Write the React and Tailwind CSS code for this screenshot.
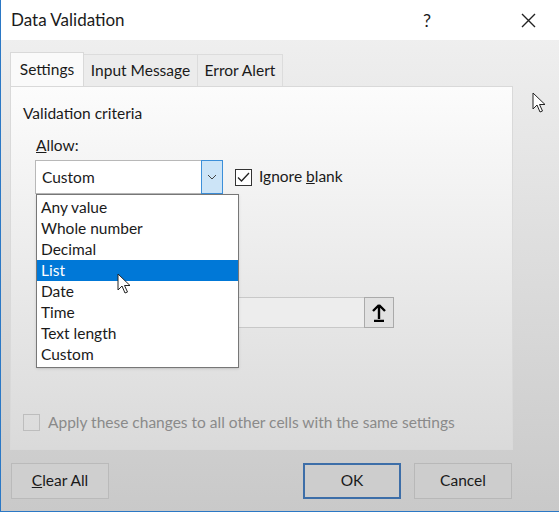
import React from "react";

const Cursor = ({ className }) => (
  <svg className={className} width="14" height="22" viewBox="0 0 14 22">
    <path d="M1 1 L1 17 L5 13 L8 20 L10.5 19 L7.5 12.5 L13 12.5 Z" fill="white" stroke="#222" strokeWidth="1" strokeLinejoin="round" />
  </svg>
);

export default function App() {
  const items = ["Any value", "Whole number", "Decimal", "List", "Date", "Time", "Text length", "Custom"];
  return (
    <div className="w-[559px] h-[512px] overflow-hidden relative border-l border-b border-[#2b78c5] text-[#1a1a1a] bg-gradient-to-b from-[#f2f2f2] to-[#c9c9c9]" style={{ fontFamily: 'Lato,"Noto Sans",sans-serif' }}>
      <div className="h-[40px] bg-white flex items-center pl-[10px] text-[17px]">
        <span>Data Validation</span>
        <span className="ml-auto mr-[90px] text-[18px]">?</span>
        <svg className="mr-[23px]" width="15" height="15" viewBox="0 0 15 15"><path d="M1 1 L14 14 M14 1 L1 14" stroke="#222" strokeWidth="1.4" /></svg>
      </div>
      <div className="flex mt-[12px] ml-[9px] h-[34px] text-[15.5px]">
        <div className="w-[74px] bg-[#fafafa] border border-b-0 border-[#d9d9d9] flex items-center justify-center pt-[1px]">Settings</div>
        <div className="w-[114px] bg-[#ececec] border-t border-r border-[#dcdcdc] flex items-center justify-center mt-[2px]">Input Message</div>
        <div className="w-[85px] bg-[#ececec] border-t border-r border-[#dcdcdc] flex items-center justify-center mt-[2px]">Error Alert</div>
      </div>
      <div className="ml-[9px] w-[503px] h-[364px] border border-[#d9d9d9] bg-gradient-to-b from-[#fcfcfc] to-[#dadada] relative text-[15.5px]">
        <div className="pl-[12px] pt-[16px] leading-[20px]">Validation criteria</div>
        <div className="pl-[25px] pt-[12px] leading-[20px]"><span className="underline">A</span>llow:</div>
        <div className="flex items-center mt-[5px] ml-[24px]">
          <div className="w-[188px] h-[34px] border border-[#b8b8b8] bg-white flex items-center">
            <span className="pl-[6px] pt-[2px] flex-1">Custom</span>
            <div className="w-[22px] h-[34px] -mr-px bg-[#cce4f7] border border-[#3c8fd9] flex items-center justify-center">
              <svg width="10" height="6" viewBox="0 0 10 6"><path d="M1 1 L5 5 L9 1" fill="none" stroke="#444" strokeWidth="1" /></svg>
            </div>
          </div>
          <div className="ml-[12px] w-[17px] h-[17px] border border-[#333] bg-white flex items-center justify-center">
            <svg width="13" height="11" viewBox="0 0 13 11"><path d="M1 5.5 L4.5 9 L12 1" fill="none" stroke="#222" strokeWidth="1.3" /></svg>
          </div>
          <span className="ml-[7px]">Ignore <span className="underline">b</span>lank</span>
        </div>
        <div className="absolute left-[227px] top-[210px] w-[156px] h-[31px] border border-[#c8c8c8] bg-[#ededed] flex justify-end">
          <div className="w-[30px] h-[31px] -mt-px -mr-px border border-[#aaa] bg-[#e1e1e1] flex items-center justify-center">
            <svg width="14" height="18" viewBox="0 0 14 18"><path d="M7 1 L1 7 M7 1 L13 7 M7 1 L7 15 M2 17 L12 17" fill="none" stroke="#000" strokeWidth="2.4" /></svg>
          </div>
        </div>
        <div className="absolute left-[25px] top-[107px] w-[203px] border border-[#777] bg-white py-[2px] shadow-sm">
          {items.map((t) => (
            <div key={t} className={`h-[21px] leading-[21px] pl-[4px] ${t === "List" ? "bg-[#0078d7] text-white" : ""}`}>{t}</div>
          ))}
        </div>
        <Cursor className="absolute left-[106px] top-[186px]" />
        <div className="absolute left-[12px] top-[324px] flex items-center text-[#8a8a8a]">
          <div className="w-[17px] h-[17px] border border-[#bdbdbd]" />
          <span className="ml-[8px]">Apply these changes to all other cells with the same settings</span>
        </div>
      </div>
      <div className="flex mt-[13px] ml-[10px] text-[15.5px]">
        <div className="w-[98px] h-[36px] bg-[#cfcfcf] border border-[#bababa] flex items-center justify-center"><span><span className="underline">C</span>lear All</span></div>
        <div className="w-[98px] h-[36px] ml-[194px] bg-[#cdcdcd] border-2 border-[#3d6ea8] flex items-center justify-center">OK</div>
        <div className="w-[98px] h-[36px] ml-[13px] bg-[#cdcdcd] border border-[#b8b8b8] flex items-center justify-center">Cancel</div>
      </div>
      <Cursor className="absolute left-[531px] top-[92px]" />
    </div>
  );
}
